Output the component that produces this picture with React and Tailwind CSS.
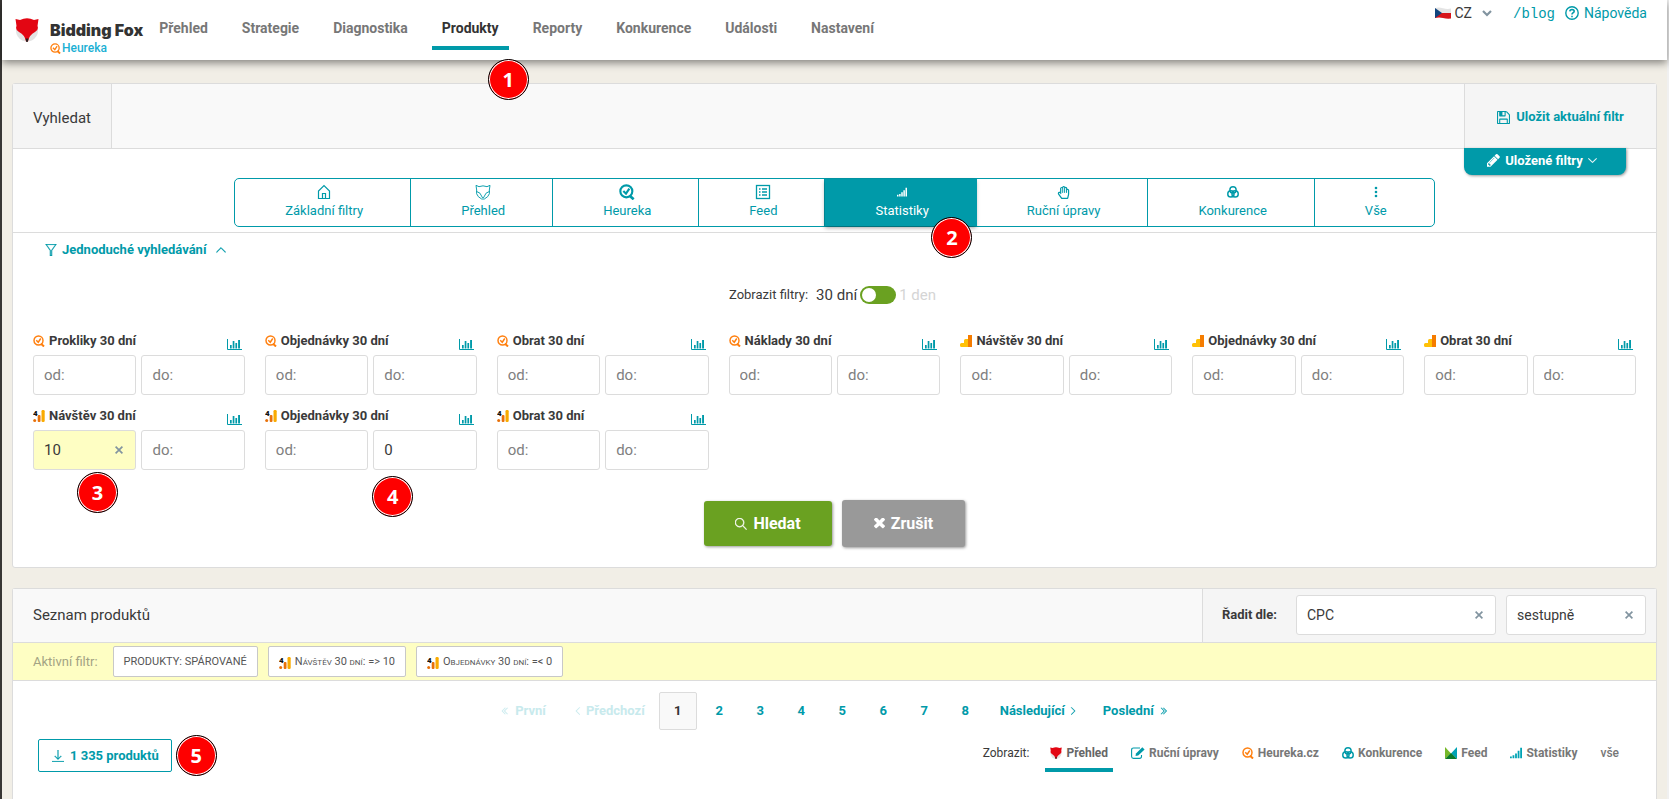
import React, { useState } from 'react';
import { TfiSearch, TfiDownload, TfiFilter, TfiAngleUp, TfiAngleDown, TfiAngleLeft, TfiAngleRight, TfiAngleDoubleLeft, TfiAngleDoubleRight } from 'react-icons/tfi';
import { FaRegHandPaper } from 'react-icons/fa';

const FoxIcon = ({ className }) => (
  <svg viewBox="0 0 24 24" className={className} aria-hidden="true">
    <circle cx="12" cy="12.5" r="11" fill="#e3e3e3" />
    <path d="M0.500 1 L5 2 Q12 -1.5 19 2 L23.500 1 L22.500 8 Q24 12 20 14 Q14 17 13 23.5 H11 Q10 17 4 14 Q0 12 1.500 8 Z" fill="#e30613" />
    <path d="M10.500 20.500 H13.500 L12.600 24 H11.400 Z" fill="#222" />
  </svg>
);

const FoxOutline = () => (
  <svg viewBox="0 0 24 24" className="h-4 w-4" fill="none" stroke="currentColor" strokeWidth="1.4" aria-hidden="true">
    <path d="M1.500 2 L6 4 Q12 1.500 18 4 L22.500 2 L21.500 9 Q23 15 19 19 L14 22.500 H10 L5 19 Q1 15 2.500 9 Z" />
    <path d="M2 11 Q8 11.500 11.500 21 M22 11 Q16 11.500 12.500 21" />
  </svg>
);

const HeurekaIcon = ({ className, bold }) => (
  <svg viewBox="0 0 24 24" className={className} fill="none" stroke="currentColor" strokeWidth={bold ? 3.2 : 2.9} aria-hidden="true">
    <circle cx="11" cy="11" r="9" />
    <path d="M6.500 10.500 L10.500 14.500 L15.500 7" />
    <path d="M16 17.500 L22 23" strokeWidth="4" />
  </svg>
);

const HomeIcon = () => (
  <svg viewBox="0 0 16 16" className="h-4 w-4" fill="none" stroke="currentColor" strokeWidth="1.2" aria-hidden="true">
    <path d="M2.500 14.500 V7 L8 1.500 L13.500 7 V14.500 Z" />
    <path d="M6.500 14 V9.500 H9.500 V14" />
  </svg>
);

const ListIcon = () => (
  <svg viewBox="0 0 16 16" className="h-4 w-4" fill="none" stroke="currentColor" strokeWidth="1.3" aria-hidden="true">
    <rect x="1.500" y="1.500" width="13" height="13" />
    <path d="M4 5 H5.500 M7 5 H12 M4 8 H5.500 M7 8 H12 M4 11 H5.500 M7 11 H12" />
  </svg>
);

const SignalIcon = ({ className }) => (
  <svg viewBox="0 0 16 16" className={className} fill="currentColor" aria-hidden="true">
    <path d="M0 12.500h2.400V15H0z M3.400 11h2.400v4H3.400z M6.800 8.500H9.200V15H6.800z M10.200 5h2.400v10h-2.400z M13.600 1h2.400v14h-2.400z" />
  </svg>
);

const CirclesIcon = ({ className }) => (
  <svg viewBox="0 0 16 16" className={className} fill="none" stroke="currentColor" strokeWidth="1.900" aria-hidden="true">
    <circle cx="8" cy="5.300" r="4.200" />
    <circle cx="5.200" cy="10.500" r="4.200" />
    <circle cx="10.800" cy="10.500" r="4.200" />
  </svg>
);

const DotsIcon = () => (
  <svg viewBox="0 0 16 16" className="h-4 w-4" fill="currentColor" aria-hidden="true">
    <circle cx="8" cy="4" r="1.300" />
    <circle cx="8" cy="8" r="1.300" />
    <circle cx="8" cy="12" r="1.300" />
  </svg>
);

const BarChartIcon = () => (
  <svg viewBox="0 0 15 12" className="h-3 w-[15px]" aria-hidden="true">
    <path d="M0.500 0 V10.500 H15" fill="none" stroke="#009aa9" />
    <path d="M3 6h1.700v3.500H3z M5.700 2h1.700v7.500H5.700z M8.400 4h1.700v5.500H8.400z M11.100 1h1.900v8.500h-1.900z" fill="#009aa9" />
  </svg>
);

const AnalyticsIcon = ({ className }) => (
  <svg viewBox="0 0 12 12" className={className} aria-hidden="true">
    <path d="M1.500 8 H4 V5.500 Q4 4 5.500 4 H8 V12 H1.500 Q0 12 0 10.500 V9.500 Q0 8 1.500 8z" fill="#ffc107" />
    <path d="M8 0h4v12H8z" fill="#f57c00" />
  </svg>
);

const Ga4Icon = ({ className }) => (
  <svg viewBox="0 0 12 12" className={className} aria-hidden="true">
    <circle cx="1.700" cy="10.400" r="1.500" fill="#e8710a" />
    <rect x="4.700" y="5" width="2.800" height="7" rx="1" fill="#e8710a" />
    <rect x="8.500" y="0" width="3.200" height="12" rx="1.200" fill="#f9ab00" />
    <text x="0" y="6" fontSize="8" fontWeight="900" fill="#111">4</text>
  </svg>
);

const SaveIcon = () => (
  <svg viewBox="0 128 1536 1536" className="h-[13px] w-[13px]" fill="currentColor" aria-hidden="true">
    <path d="M384 1536h768v-384h-768v384zM1280 1536h128v-896q0-14-10-38.500t-20-34.500l-281-281q-10-10-34-20t-39-10v416q0 40-28 68t-68 28h-576q-40 0-68-28t-28-68v-416h-128v1280h128v-416q0-40 28-68t68-28h832q40 0 68 28t28 68v416zM896 608v-320q0-13-9.500-22.500t-22.500-9.500h-192q-13 0-22.500 9.500t-9.500 22.500v320q0 13 9.500 22.500t22.500 9.500h192q13 0 22.500-9.500t9.500-22.500zM1536 640v928q0 40-28 68t-68 28h-1344q-40 0-68-28t-28-68v-1344q0-40 28-68t68-28h928q40 0 88 20t76 48l280 280q28 28 48 76t20 88z" />
  </svg>
);

const PencilIcon = () => (
  <svg viewBox="128 149 1536 1536" className="h-[13px] w-[13px]" fill="currentColor" aria-hidden="true">
    <path d="M491 1536l91-91-235-235-91 91v107h128v128h107zM1014 608q0-22-22-22-10 0-17 7l-542 542q-7 7-7 17 0 22 22 22 10 0 17-7l542-542q7-7 7-17zM960 416l416 416-832 832h-416v-416zM1643 512q0 53-37 90l-166 166-416-416 166-165q36-38 90-38 53 0 91 38l235 234q37 39 37 91z" />
  </svg>
);

const EditIcon = ({ className }) => (
  <svg viewBox="0 0 14 12" className={className} fill="none" stroke="currentColor" aria-hidden="true">
    <path d="M9 1 H2.500 Q0.600 1 0.600 3 V9.500 Q0.600 11.400 2.500 11.400 H8.500 Q10.500 11.400 10.500 9.500 V8" strokeWidth="1.100" />
    <path d="M4.500 9 L5 6.400 L11.300 0.300 L13.600 2.500 L7.200 8.600 Z" fill="currentColor" stroke="none" />
  </svg>
);

const TimesIcon = () => (
  <svg viewBox="300 430 1192 1192" className="h-[11px] w-[11px]" fill="currentColor" aria-hidden="true">
    <path d="M1490 1322q0 40-28 68l-136 136q-28 28-68 28t-68-28l-294-294-294 294q-28 28-68 28t-68-28l-136-136q-28-28-28-68t28-68l294-294-294-294q-28-28-28-68t28-68l136-136q28-28 68-28t68 28l294 294 294-294q28-28 68-28t68 28l136 136q28 28 28 68t-28 68l-294 294 294 294q28 28 28 68z" />
  </svg>
);

const ClearIcon = () => (
  <svg viewBox="0 0 8 8" className="h-2 w-2" fill="none" stroke="#8294a0" strokeWidth="1.700" aria-hidden="true">
    <path d="M0.600 0.600 L7.400 7.400 M7.400 0.600 L0.600 7.400" />
  </svg>
);

const FeedIcon = ({ className }) => (
  <svg viewBox="0 0 12 12" className={className} aria-hidden="true">
    <path d="M0 0 L6 6.500 L0 12z" fill="#76b82a" />
    <path d="M12 0 L6 6.500 L12 12z" fill="#00a3b4" />
    <path d="M0 12 L6 6 L12 12z" fill="#0b7a2a" />
  </svg>
);

const FlagIcon = () => (
  <svg viewBox="0 0 16 12" className="h-3 w-4" aria-hidden="true">
    <path d="M0 1 Q4 0 8 1.200 T16 1.500 V6.500 H0z" fill="#e4e4e4" />
    <path d="M0 6 H16 V11.500 Q12 12 8 11 T0 11z" fill="#d7141a" />
    <path d="M0 1 L7 6 L0 11z" fill="#11457e" />
  </svg>
);

const HelpIcon = () => (
  <svg viewBox="0 0 14 14" className="h-[14px] w-[14px]" fill="none" stroke="currentColor" strokeWidth="1.400" aria-hidden="true">
    <circle cx="7" cy="7" r="6.200" />
    <path d="M4.800 5.400 Q5 3.500 7 3.500 Q9.200 3.600 9.200 5.300 Q9.100 6.500 7.800 7 Q7 7.400 7 8.600" strokeWidth="1.600" />
    <path d="M7 9.700 V11.200" strokeWidth="1.600" />
  </svg>
);

const Step = ({ n, className }) => (
  <span
    className={`absolute z-20 flex h-[41px] w-[41px] items-center justify-center rounded-full border border-black bg-[#fe0000] font-['Open_Sans',sans-serif] text-xl font-bold text-white shadow-[inset_0_0_0_1px_#fff] ${className}`}
  >
    {n}
  </span>
);

// lowercase runs are drawn as reduced capitals
const SmallCaps = ({ text }) => (
  <span>
    {text.split(/(\p{Ll}+)/u).map((part, idx) => (
      idx % 2 ? <span key={idx} className="text-[8px] uppercase">{part}</span> : part
    ))}
  </span>
);

const nav = ['Přehled', 'Strategie', 'Diagnostika', 'Produkty', 'Reporty', 'Konkurence', 'Události', 'Nastavení'];

const tabs = [
  { label: 'Základní filtry', icon: <HomeIcon /> },
  { label: 'Přehled', icon: <FoxOutline /> },
  { label: 'Heureka', icon: <HeurekaIcon className="h-4 w-4" bold /> },
  { label: 'Feed', icon: <ListIcon /> },
  { label: 'Statistiky', icon: <SignalIcon className="h-[10px] w-[10px]" /> },
  { label: 'Ruční úpravy', icon: <FaRegHandPaper size={13} /> },
  { label: 'Konkurence', icon: <CirclesIcon className="h-3 w-3" /> },
  { label: 'Vše', icon: <DotsIcon /> },
];

const sources = {
  heureka: <HeurekaIcon className="h-3 w-3 text-[#ff7f0e]" />,
  ga: <AnalyticsIcon className="h-3 w-3" />,
  ga4: <Ga4Icon className="h-3 w-3" />,
};

const filters = [
  { source: 'heureka', label: 'Prokliky 30 dní' },
  { source: 'heureka', label: 'Objednávky 30 dní' },
  { source: 'heureka', label: 'Obrat 30 dní' },
  { source: 'heureka', label: 'Náklady 30 dní' },
  { source: 'ga', label: 'Návštěv 30 dní' },
  { source: 'ga', label: 'Objednávky 30 dní' },
  { source: 'ga', label: 'Obrat 30 dní' },
  { source: 'ga4', label: 'Návštěv 30 dní', from: '10', step: 3 },
  { source: 'ga4', label: 'Objednávky 30 dní', to: '0', step: 4 },
  { source: 'ga4', label: 'Obrat 30 dní' },
];

const views = [
  { label: 'Přehled', icon: <FoxIcon className="h-3 w-3" />, active: true },
  { label: 'Ruční úpravy', icon: <EditIcon className="h-3 w-[14px] text-[#009aa9]" /> },
  { label: 'Heureka.cz', icon: <HeurekaIcon className="h-3 w-3 text-[#ff7f0e]" /> },
  { label: 'Konkurence', icon: <CirclesIcon className="h-3 w-3 text-[#009aa9]" /> },
  { label: 'Feed', icon: <FeedIcon className="h-3 w-3" /> },
  { label: 'Statistiky', icon: <SignalIcon className="h-3 w-3 text-[#00a3b4]" /> },
];

const inputClass = 'h-10 w-full rounded-[3px] border border-[#dcdcdc] px-[10px] text-[15px] text-[#3a3a3a] outline-none placeholder:text-[#808080]';

const RangeFilter = ({ id, filter }) => {
  const [from, setFrom] = useState(filter.from || '');
  const [to, setTo] = useState(filter.to || '');

  return (
    <div>
      <div className="mb-1 flex h-5 items-center justify-between">
        <label htmlFor={`${id}-from`} className="flex items-center gap-1 text-[13px] font-bold leading-5">
          {sources[filter.source]}
          {filter.label}
        </label>
        <button type="button" aria-label="Graf" className="mr-[3px] self-end">
          <BarChartIcon />
        </button>
      </div>
      <div className="grid grid-cols-2 gap-[5px]">
        <div className="relative">
          <input
            id={`${id}-from`}
            placeholder="od:"
            value={from}
            onChange={(e) => setFrom(e.target.value)}
            className={`${inputClass} ${from ? 'bg-[#fefec3]' : 'bg-white'}`}
          />
          {from && (
            <button type="button" aria-label="Smazat" onClick={() => setFrom('')} className="absolute right-[13px] top-4">
              <ClearIcon />
            </button>
          )}
          {filter.step === 3 && <Step n={3} className="left-11 top-[42px]" />}
        </div>
        <div className="relative">
          <input
            placeholder="do:"
            aria-label={`${filter.label} do`}
            value={to}
            onChange={(e) => setTo(e.target.value)}
            className={`${inputClass} bg-white`}
          />
          {filter.step === 4 && <Step n={4} className="-left-px top-[46px]" />}
        </div>
      </div>
    </div>
  );
};

const SortSelect = ({ id, label, option, className }) => (
  <div className={`relative ${className}`}>
    <select
      id={id}
      aria-label={label}
      className="h-10 w-full appearance-none rounded-[3px] border border-[#dcdcdc] bg-white px-[10px] text-[14px] text-[#3a3a3a]"
    >
      <option>{option}</option>
    </select>
    <button type="button" aria-label="Zrušit řazení" className="absolute right-[13px] top-4">
      <ClearIcon />
    </button>
  </div>
);

const chipClass = 'flex h-[31px] items-center gap-1 rounded-xs border border-[#c8c8c8] bg-white px-[10px] pt-0.5 text-[11px] text-[#555]';

const App = () => {
  const [oneDay, setOneDay] = useState(false);

  return (
    <div className="flex min-h-screen flex-col border-l-2 border-r-2 border-l-[#383634] border-r-[#f0f0f0] bg-[#f1eee6] font-[Roboto,sans-serif] text-[#3a3a3a]">
      <header className="relative z-10 flex h-[60px] items-start bg-white pl-[13px] pr-5 shadow-[0_3px_8px_rgba(0,0,0,0.45)]">
        <a href="#" className="mt-[18px] flex gap-[11px]">
          <FoxIcon className="h-6 w-6" />
          <span>
            <span className="block font-[Inter,sans-serif] text-base font-black leading-6 text-[#333]">Bidding Fox</span>
            <span className="flex items-center gap-px text-[12px] font-medium leading-3 text-[#1ab0d4]">
              <HeurekaIcon className="h-[11px] w-[11px] text-[#ff7f0e]" />
              Heureka
            </span>
          </span>
        </a>
        <nav className="ml-[6px] mt-[18px] flex gap-[14px]">
          {nav.map((item) => (
            <div key={item} className="relative">
              <a
                href="#"
                className={`block border-b-4 px-[10px] pb-2 text-[14px] font-bold leading-5 ${
                  item === 'Produkty' ? 'border-[#009aa9] text-[#333]' : 'border-transparent text-[#777]'
                }`}
              >
                {item}
              </a>
              {item === 'Produkty' && <Step n={1} className="left-14 top-[41px]" />}
            </div>
          ))}
        </nav>
        <div className="ml-auto flex items-center pt-[2px] text-[14px] leading-5 text-[#009aa9]">
          <button type="button" className="mr-[21px] flex items-center text-[#3a3a3a]">
            <FlagIcon />
            <span className="ml-1 mr-[10px]">CZ</span>
            <svg viewBox="0 0 10 7" className="h-[7px] w-[10px]" fill="none" stroke="#8294a0" strokeWidth="2.200" aria-hidden="true">
              <path d="M1 1 L5 5 L9 1" />
            </svg>
          </button>
          <a href="#" className="mr-[10px] pt-0.5 font-['Liberation_Mono',monospace]">/blog</a>
          <a href="#" className="flex items-center gap-[5px]">
            <HelpIcon />
            Nápověda
          </a>
        </div>
      </header>

      <main className="flex flex-1 flex-col gap-5 px-[10px] pt-[23px]">
        <section className="rounded-[3px] border border-[#dcdcdc] bg-white">
          <div className="flex h-[65px] border-b border-[#dcdcdc] bg-[#f9f9f9]">
            <h2 className="flex items-center border-r border-[#dcdcdc] bg-[#f5f5f5] px-5 pt-1 text-[15px]">Vyhledat</h2>
            <div className="relative ml-auto flex w-[192px] items-center justify-center border-l border-[#dcdcdc] bg-[#f5f5f5]">
              <button type="button" className="flex items-center gap-[6px] pt-0.5 text-[13px] font-bold text-[#009aa9]">
                <SaveIcon />
                Uložit aktuální filtr
              </button>
              <button
                type="button"
                className="absolute -left-px top-full flex h-[27px] w-[162px] items-center justify-center gap-[5px] rounded-b-lg bg-[#009aa9] pb-0.5 pr-[6px] text-[13px] font-bold text-white shadow-[1px_1px_3px_rgba(0,0,0,0.4)]"
              >
                <PencilIcon />
                Uložené filtry
                <TfiAngleDown size={9} strokeWidth="1" />
              </button>
            </div>
          </div>

          <div className="flex justify-center border-b border-[#dcdcdc] pb-[5px] pt-[29px]">
            <div role="tablist" className="flex h-[49px] rounded-[5px] border border-[#009aa9]">
              {tabs.map((tab, idx) => (
                <div key={tab.label} className={`relative flex ${idx ? 'border-l border-[#009aa9]' : ''}`}>
                  <button
                    type="button"
                    role="tab"
                    className={`flex flex-col items-center pl-[50px] pr-[47px] pt-[5px] text-[13px] leading-[22px] ${
                      tab.label === 'Statistiky' ? 'bg-[#009aa9] text-white shadow-[0_2px_4px_rgba(0,0,0,0.35)]' : 'text-[#009aa9]'
                    }`}
                  >
                    <span className="flex h-4 items-center">{tab.icon}</span>
                    {tab.label}
                  </button>
                  {tab.label === 'Statistiky' && <Step n={2} className="left-[106px] top-[38px]" />}
                </div>
              ))}
            </div>
          </div>

          <form onSubmit={(e) => e.preventDefault()} className="px-5 pb-5 pt-[9px]">
            <button type="button" className="ml-3 flex items-center gap-[5px] text-[13px] font-bold leading-4 text-[#009aa9]">
              <TfiFilter size={12} strokeWidth="0.5" />
              Jednoduché vyhledávání
              <TfiAngleUp size={10} strokeWidth="1" className="ml-[5px]" />
            </button>

            <div className="mb-6 mt-[25px] flex h-6 items-center justify-center">
              <span className="mr-2 text-[13px]">Zobrazit filtry:</span>
              <label htmlFor="period" className="text-[15px]">30 dní</label>
              <input
                id="period"
                type="checkbox"
                checked={oneDay}
                onChange={(e) => setOneDay(e.target.checked)}
                className="relative mx-[3px] h-[18px] w-9 appearance-none rounded-full bg-[#6aa121] before:absolute before:left-[2px] before:top-[2px] before:h-[14px] before:w-[14px] before:rounded-full before:bg-white checked:before:left-5"
              />
              <span className="mr-1 text-[15px] text-[#d5d5d5]">1 den</span>
            </div>

            <div className="grid grid-cols-7 gap-x-5 gap-y-[11px]">
              {filters.map((filter, idx) => (
                <RangeFilter key={idx} id={`filter-${idx}`} filter={filter} />
              ))}
            </div>

            <div className="mt-[30px] flex items-center justify-center gap-[10px] text-base font-bold text-white">
              <button type="submit" className="flex h-[45px] w-32 items-center justify-center gap-[6px] rounded-[3px] bg-[#6aa121] shadow-[1px_1px_3px_rgba(0,0,0,0.4)]">
                <TfiSearch size={12} strokeWidth="0.7" />
                Hledat
              </button>
              <button type="reset" className="flex h-[47px] w-[123px] items-center justify-center gap-[6px] rounded-[3px] bg-[#999] shadow-[1px_1px_3px_rgba(0,0,0,0.4)]">
                <TimesIcon />
                Zrušit
              </button>
            </div>
          </form>
        </section>

        <section className="flex-1 rounded-t-[3px] border border-b-0 border-[#dcdcdc] bg-white">
          <div className="flex h-[54px] border-b border-[#dcdcdc] bg-[#f9f9f9]">
            <h2 className="flex items-center px-5 text-[15px]">Seznam produktů</h2>
            <div className="ml-auto flex items-center gap-[10px] border-l border-[#dcdcdc] bg-[#f5f5f5] pb-px pl-[19px] pr-[10px]">
              <label htmlFor="sort" className="mr-[9px] text-[13px] font-bold">Řadit dle:</label>
              <SortSelect id="sort" label="Řadit dle" option="CPC" className="w-[200px]" />
              <SortSelect id="direction" label="Směr řazení" option="sestupně" className="w-[140px]" />
            </div>
          </div>

          <div className="flex h-[38px] items-center gap-[10px] border-b border-[#dcdcdc] bg-[#fefec3] px-5">
            <span className="mr-[5px] text-[13px] text-[#a3a384]">Aktivní filtr:</span>
            <button type="button" className={chipClass}>PRODUKTY: SPÁROVANÉ</button>
            <button type="button" className={chipClass}>
              <Ga4Icon className="h-3 w-3" />
              <SmallCaps text="Návštěv 30 dní: => 10" />
            </button>
            <button type="button" className={chipClass}>
              <Ga4Icon className="h-3 w-3" />
              <SmallCaps text="Objednávky 30 dní: =< 0" />
            </button>
          </div>

          <nav className="mt-[11px] flex h-[38px] items-center justify-center gap-1 text-[13px] font-bold text-[#009aa9]">
            <span className="flex items-center gap-[6px] px-3 text-[#c8eaed]">
              <TfiAngleDoubleLeft size={8} strokeWidth="1" />
              První
            </span>
            <span className="flex items-center gap-1 pl-3 pr-[10px] text-[#c8eaed]">
              <TfiAngleLeft size={8} strokeWidth="1" />
              Předchozí
            </span>
            <span className="flex h-[38px] w-[38px] items-center justify-center rounded-xs border border-[#dcdcdc] bg-[#f9f9f9] text-[#333]">1</span>
            {[2, 3, 4, 5, 6, 7, 8].map((page) => (
              <a key={page} href="#" className="w-[37px] text-center">{page}</a>
            ))}
            <a href="#" className="flex items-center gap-1 pl-3 pr-[10px]">
              Následující
              <TfiAngleRight size={8} strokeWidth="1" />
            </a>
            <a href="#" className="flex items-center gap-[6px] px-3">
              Poslední
              <TfiAngleDoubleRight size={8} strokeWidth="1" />
            </a>
          </nav>

          <div className="mt-[9px] flex items-start justify-between pl-[25px] pr-8">
            <div className="relative">
              <button type="button" className="flex h-[33px] items-center gap-[6px] rounded-xs border border-[#009aa9] pl-[13px] pr-3 text-[13px] font-bold text-[#009aa9]">
                <TfiDownload size={12} strokeWidth="0.5" />
                1 335 produktů
              </button>
              <Step n={5} className="left-full top-[-4px] ml-1" />
            </div>
            <div className="flex pt-1 text-[12px] leading-5">
              <span className="mr-4">Zobrazit:</span>
              {views.map((view) => (
                <a
                  key={view.label}
                  href="#"
                  className={`mr-[13px] flex items-center gap-1 border-b-4 px-[5px] pb-[5px] font-bold ${
                    view.active ? 'border-[#009aa9] text-[#666]' : 'border-transparent text-[#777]'
                  }`}
                >
                  {view.icon}
                  {view.label}
                </a>
              ))}
              <a href="#" className="px-[5px] font-medium text-[#777]">vše</a>
            </div>
          </div>
        </section>
      </main>
    </div>
  );
};

export default App;
